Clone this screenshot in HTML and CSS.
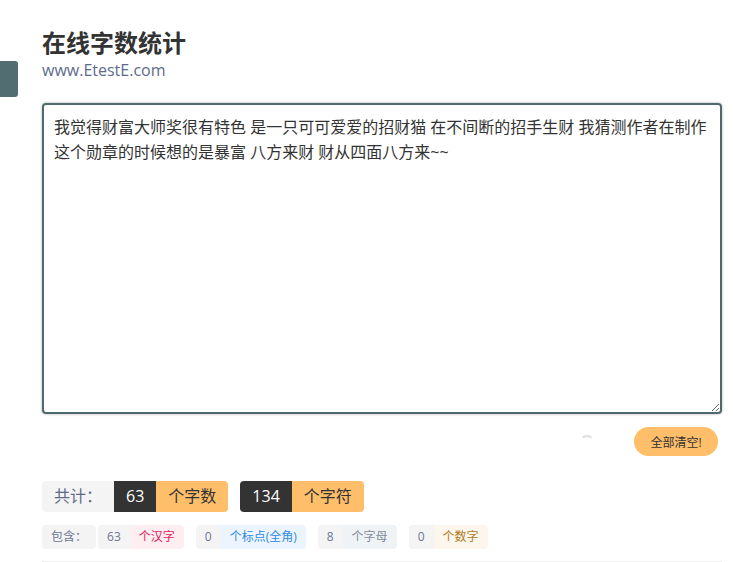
FILE: index.html
```html
<!DOCTYPE html>
<html lang="zh-CN">
<head>
    <meta charset="UTF-8">
    <meta name="viewport" content="width=device-width, initial-scale=1.0">
    <title>在线字数统计</title>
    <link rel="stylesheet" href="styles.css">
</head>
<body>

    <!-- 侧边栏开关 -->
    <div class="side-toggle"></div>

    <div class="page">

        <!-- 标题 -->
        <div class="header">
            <h1>在线字数统计</h1>
            <div class="site">www.EtestE.com</div>
        </div>

        <!-- 输入框 -->
        <textarea class="input-box" spellcheck="false">我觉得财富大师奖很有特色 是一只可可爱爱的招财猫 在不间断的招手生财 我猜测作者在制作这个勋章的时候想的是暴富 八方来财 财从四面八方来~~</textarea>

        <div class="toolbar">
            <span class="spinner"></span>
            <button class="btn-clear">全部清空!</button>
        </div>

        <!-- 统计 -->
        <div class="total">
            <span class="total-label">共计：</span>
            <span class="total-group">
                <span class="num">63</span><span class="unit">个字数</span>
            </span>
            <span class="total-group">
                <span class="num">134</span><span class="unit">个字符</span>
            </span>
        </div>

        <div class="detail">
            <span class="tag tag-label">包含：</span>
            <span class="tag-group">
                <span class="tag">63</span><span class="tag tag-danger">个汉字</span>
            </span>
            <span class="tag-group">
                <span class="tag">0</span><span class="tag tag-primary">个标点(全角)</span>
            </span>
            <span class="tag-group">
                <span class="tag">8</span><span class="tag tag-info">个字母</span>
            </span>
            <span class="tag-group">
                <span class="tag">0</span><span class="tag tag-warning">个数字</span>
            </span>
        </div>

        <div class="divider"></div>
    </div>

</body>
</html>
```

FILE: styles.css
```css
/* 全局 */
* {
    margin: 0;
    padding: 0;
    box-sizing: border-box;
}

body {
    font-family: "Open Sans", "Noto Sans CJK SC", sans-serif;
    color: #333;
    background: #fff;
}

/* 左侧按钮 */
.side-toggle {
    position: absolute;
    left: 0;
    top: 61px;
    width: 18px;
    height: 36px;
    background: #516d72;
    border-radius: 0 3px 3px 0;
}

.page {
    padding: 27px 11px 0 42px;
}

/* 标题 */
.header h1 {
    font-size: 24px;
    line-height: 32px;
    font-weight: bold;
    color: #333;
}

.header .site {
    font-size: 16px;
    line-height: 22px;
    color: #5d6b8a;
}

/* 输入框 */
.input-box {
    display: block;
    width: 680px;
    height: 311px;
    margin-top: 22px;
    padding: 10px;
    border: 2px solid #4f6a6e;
    border-radius: 4px;
    box-shadow: 0 0 2px 1px rgba(0, 0, 0, 0.15);
    font-family: "Open Sans", "Noto Sans CJK SC", sans-serif;
    font-size: 16px;
    line-height: 25px;
    color: #333;
    outline: none;
    resize: both;
}

.toolbar {
    display: flex;
    justify-content: flex-end;
    align-items: center;
    margin-top: 13px;
    padding-right: 4px;
}

.spinner {
    width: 14px;
    height: 14px;
    margin-right: 40px;
    border: 2px solid transparent;
    border-top-color: #ddd;
    border-radius: 50%;
}

.btn-clear {
    width: 84px;
    height: 29px;
    border: none;
    border-radius: 15px;
    background: #ffbe69;
    color: #333;
    font-family: "Open Sans", "Noto Sans CJK SC", sans-serif;
    font-size: 12px;
    cursor: pointer;
}

/* 统计 */
.total {
    display: flex;
    gap: 12px;
    margin-top: 25px;
    height: 31px;
    font-size: 16px;
    line-height: 31px;
}

.total-label {
    padding: 0 12px;
    margin-right: -12px;
    background: #f4f4f5;
    color: #5f6b85;
    border-radius: 4px 0 0 4px;
}

.total-group {
    display: flex;
    border-radius: 0 4px 4px 0;
    overflow: hidden;
}

.total-group:last-child {
    border-radius: 4px;
}

.total-group .num {
    padding: 0 12px;
    background: #333;
    color: #fff;
}

.total-group .unit {
    padding: 0 12px;
    background: #ffbe69;
    color: #333;
}

.detail {
    display: flex;
    gap: 12px;
    margin-top: 13px;
    font-size: 12px;
    line-height: 24px;
}

.tag {
    display: inline-block;
    height: 24px;
    padding: 0 9px;
    background: #f4f4f5;
    color: #6b7592;
}

.tag-label {
    margin-right: -10px;
    border-radius: 4px;
}

.tag-group {
    display: flex;
    border-radius: 4px;
    overflow: hidden;
}

.tag-danger {
    background: #fdeef2;
    color: #e0245e;
}

.tag-primary {
    background: #ecf5ff;
    color: #2f8be0;
}

.tag-info {
    background: #f0f3f5;
    color: #7f8b99;
}

.tag-warning {
    background: #fdf6ec;
    color: #b07a1e;
}

.divider {
    margin-top: 12px;
    border-top: 1px solid #eee;
}
```
